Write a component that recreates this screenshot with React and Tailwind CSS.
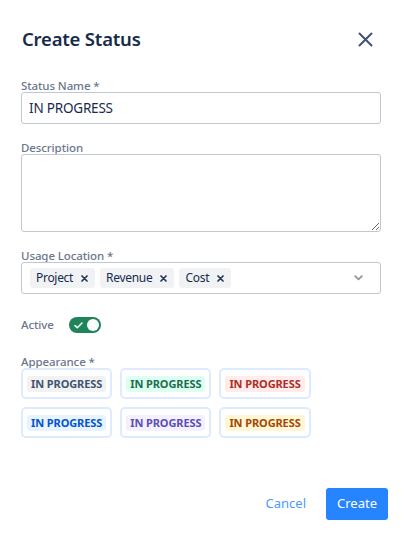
import { useState } from "react";

const BADGES = [
  { bg: "bg-[#f1f2f4]", text: "text-[#44546f]" },
  { bg: "bg-[#dcfff1]", text: "text-[#216e4e]" },
  { bg: "bg-[#ffeceb]", text: "text-[#ae2e24]" },
  { bg: "bg-[#e9f2ff]", text: "text-[#0055cc]" },
  { bg: "bg-[#f3f0ff]", text: "text-[#5e4db2]" },
  { bg: "bg-[#fff7d6]", text: "text-[#a54800]" },
];

function Label({ children }) {
  return (
    <div className="h-[12px] text-[11.5px] leading-[12px] font-medium tracking-[-0.1px] text-[#6b778c]">
      {children}
    </div>
  );
}

function Tag({ label }) {
  return (
    <span className="flex h-[20px] items-center gap-[8px] rounded-[3px] bg-[#f1f2f4] pl-[6px] pr-[7px] text-[12px] tracking-[-0.3px] text-[#172b4d]">
      {label}
      <svg width="7" height="7" viewBox="0 0 7 7" className="text-[#253858]">
        <path d="M1 1 6 6M6 1 1 6" stroke="currentColor" strokeWidth="1.7" strokeLinecap="round" />
      </svg>
    </span>
  );
}

export default function App() {
  const [active, setActive] = useState(true);
  const [name, setName] = useState("IN PROGRESS");

  return (
    <div
      className="flex h-[541px] w-[409px] flex-col bg-white"
      style={{ fontFamily: '"Noto Sans", "Liberation Sans", sans-serif' }}
    >
      <div className="mt-[23px] flex h-[32px] items-center justify-between pl-[22px] pr-[28px]">
        <h1 className="text-[18.5px] font-semibold tracking-[-0.2px] text-[#172b4d]">Create Status</h1>
        <button type="button" aria-label="Close" className="flex h-[32px] w-[32px] items-center justify-center text-[#42526e]">
          <svg width="15" height="15" viewBox="0 0 15 15">
            <path d="M1.5 1.5 13.5 13.5M13.5 1.5 1.5 13.5" stroke="currentColor" strokeWidth="2" strokeLinecap="round" />
          </svg>
        </button>
      </div>

      <div className="mt-[25px] flex flex-col pl-[21px] pr-[28px]">
        <Label>Status Name *</Label>
        <input
          value={name}
          onChange={(e) => setName(e.target.value)}
          className="h-[32px] rounded-[3px] border border-[#c1c7d0] px-[7px] text-[13.5px] tracking-[-0.2px] text-[#172b4d] outline-none"
        />

        <div className="mt-[18px]">
          <Label>Description</Label>
        </div>
        <textarea className="h-[78px] resize-y rounded-[3px] border border-[#c1c7d0] px-[7px] py-[6px] text-[13.5px] outline-none" />

        <div className="mt-[18px]">
          <Label>Usage Location *</Label>
        </div>
        <div className="flex h-[32px] items-center justify-between rounded-[3px] border border-[#c1c7d0] pl-[8px] pr-[17px]">
          <div className="flex items-center gap-[5px]">
            <Tag label="Project" />
            <Tag label="Revenue" />
            <Tag label="Cost" />
          </div>
          <svg width="9" height="6" viewBox="0 0 9 6" className="text-[#8993a4]">
            <path d="M1.2 1.2 4.5 4.3 7.8 1.2" fill="none" stroke="currentColor" strokeWidth="1.7" strokeLinecap="round" strokeLinejoin="round" />
          </svg>
        </div>

        <div className="mt-[22px] flex h-[18px] items-center gap-[15px]">
          <span className="text-[11.5px] font-medium tracking-[-0.1px] text-[#6b778c]">Active</span>
          <button
            type="button"
            onClick={() => setActive(!active)}
            className="flex h-[16px] w-[32px] items-center justify-between rounded-full bg-[#1f845a] pl-[5px] pr-[2px]"
          >
            <svg width="9" height="7" viewBox="0 0 9 7">
              <path d="M1 3.6 3.3 5.8 8 1" fill="none" stroke="white" strokeWidth="1.5" strokeLinecap="round" strokeLinejoin="round" />
            </svg>
            <span className="h-[12px] w-[12px] rounded-full bg-white" />
          </button>
        </div>

        <div className="mt-[22px]">
          <Label>Appearance *</Label>
        </div>
        <div className="grid w-fit grid-cols-3 gap-x-[8px] gap-y-[8px]">
          {BADGES.map((b, i) => (
            <button
              key={i}
              type="button"
              className="flex h-[31px] items-center justify-center rounded-[5px] border-2 border-[#deebff] px-[4px]"
            >
              <span className={`rounded-[3px] px-[4px] text-[11px] leading-[16px] font-bold tracking-[-0.1px] ${b.bg} ${b.text}`}>
                IN PROGRESS
              </span>
            </button>
          ))}
        </div>
      </div>

      <div className="mt-[50px] flex items-center justify-end gap-[8px] pr-[21px]">
        <button type="button" className="h-[32px] px-[12px] text-[13px] text-[#4c9aff]">
          Cancel
        </button>
        <button type="button" className="h-[32px] rounded-[3px] bg-[#2684ff] px-[11px] text-[13px] text-white">
          Create
        </button>
      </div>
    </div>
  );
}
